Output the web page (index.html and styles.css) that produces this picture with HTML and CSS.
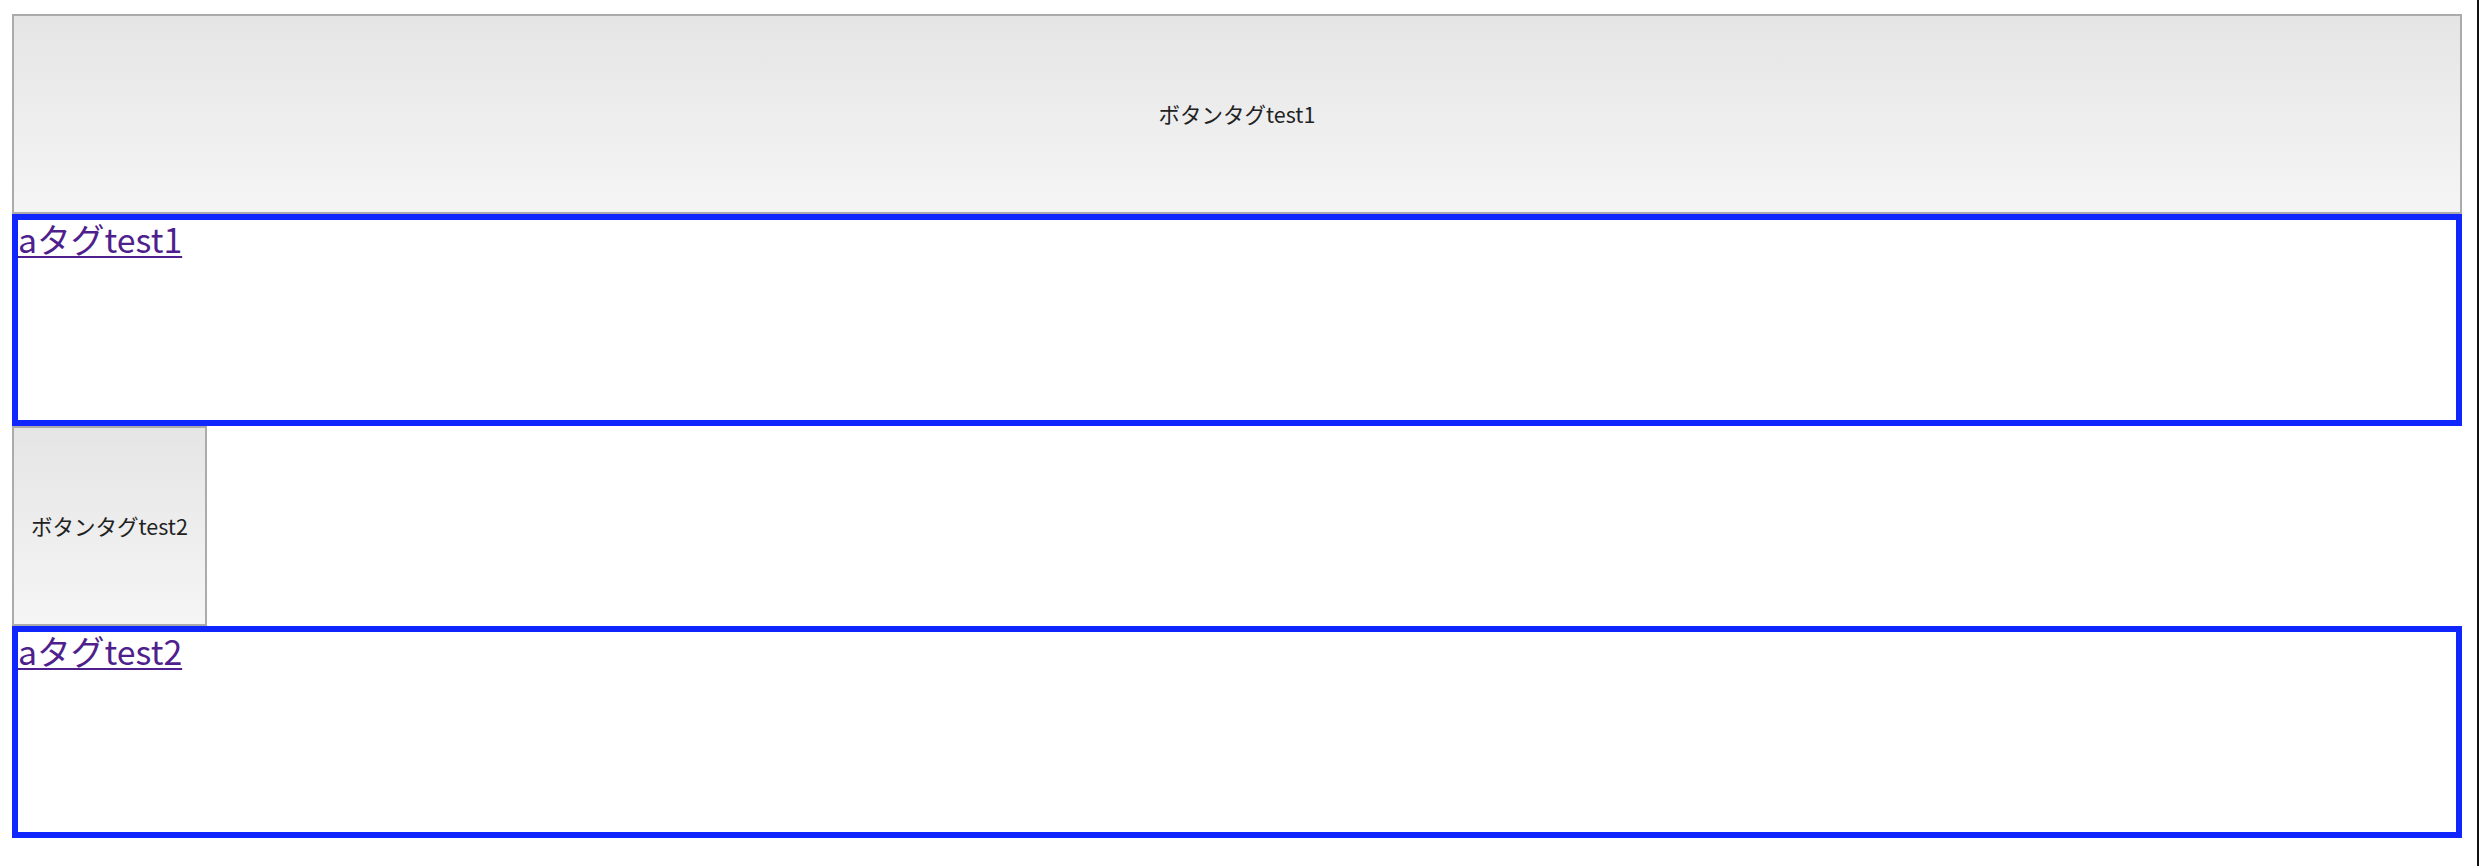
FILE: index.html
```html
<!DOCTYPE html>
<html lang="ja">
<head>
<meta charset="utf-8">
<title>test</title>
<link rel="stylesheet" href="styles.css">
</head>
<body>
<button class="btn btn-full" type="button">ボタンタグtest1</button>
<a class="link-box" href="#">aタグtest1</a>
<button class="btn btn-small" type="button">ボタンタグtest2</button>
<a class="link-box" href="#">aタグtest2</a>
</body>
</html>
```
FILE: styles.css
```css
html {
  background: linear-gradient(to right, #ffffff calc(100% - 3px), #111111 calc(100% - 3px), #111111 calc(100% - 1px), #ffffff calc(100% - 1px));
  min-height: 100%;
}
body {
  margin: 14px 18px 0 12px;
  font-family: "Noto Sans CJK JP", "Noto Sans", sans-serif;
}
.btn {
  display: block;
  box-sizing: border-box;
  height: 200px;
  margin: 0;
  padding: 0;
  border: 2px solid #ababab;
  border-radius: 0;
  background: linear-gradient(to bottom, #e5e5e5, #f5f5f5);
  color: #222222;
  font-family: "Noto Sans CJK JP", "Noto Sans", sans-serif;
  font-size: 21.5px;
  line-height: 1;
  cursor: pointer;
}
.btn-full {
  width: 100%;
}
.btn-small {
  width: 195px;
}
.link-box {
  display: block;
  height: 200px;
  border: 6px solid #0f26ff;
  color: #4f1f8e;
  font-size: 33.8px;
  line-height: 38px;
  text-decoration: underline;
  text-decoration-thickness: 2px;
  text-underline-offset: 3px;
}
```
